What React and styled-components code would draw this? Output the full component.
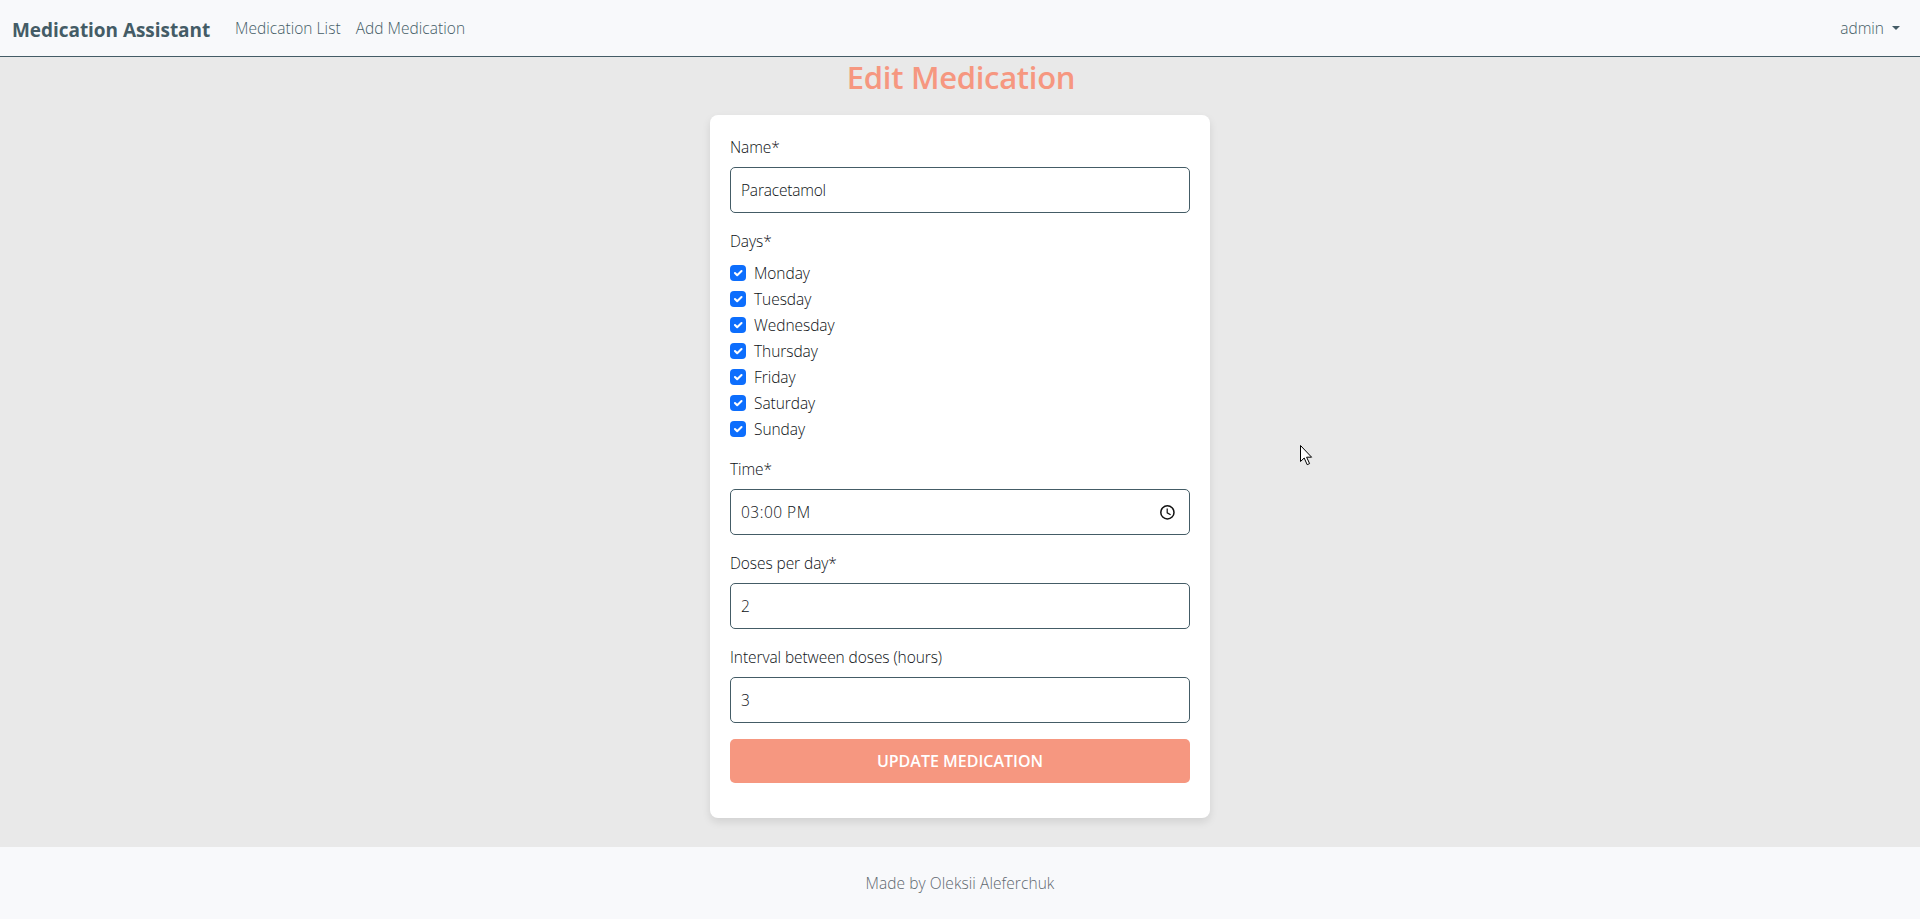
import React from "react";
import styled, { createGlobalStyle } from "styled-components";

const slate = "#445c66";
const coral = "#f69780";

const GlobalStyle = createGlobalStyle`
  *, *::before, *::after { box-sizing: border-box; }
  body {
    margin: 0;
    background: #e9e9e9;
    color: #0c1014;
    font: 350 15.5px/24px "Open Sans", "Noto Sans", sans-serif;
  }
`;

const Page = styled.div`
  display: flex;
  flex-direction: column;
  height: 919px;
  overflow: hidden;
`;

const Navbar = styled.nav`
  display: flex;
  align-items: center;
  flex: none;
  height: 57px;
  padding: 0 20px 0 12px;
  background: #f8f9fb;
  border-bottom: 1px solid ${slate};
  color: ${slate};
`;

const Brand = styled.a`
  width: 223px;
  padding-top: 3px;
  font-size: 19px;
  font-weight: 700;
  line-height: 30px;
  letter-spacing: -0.05px;
  white-space: nowrap;
`;

const NavLink = styled.a`
  margin-right: 15px;
  letter-spacing: 0.04px;
  white-space: nowrap;
`;

const UserMenu = styled.button`
  display: flex;
  align-items: center;
  gap: 8px;
  margin-left: auto;
  padding: 0;
  border: 0;
  background: none;
  color: inherit;
  font: inherit;
`;

const Caret = styled.span`
  border: 4.5px solid transparent;
  border-top-color: currentColor;
  border-bottom: 0;
`;

const Main = styled.main`
  display: flex;
  flex-direction: column;
  align-items: center;
  flex: 1;
`;

const Title = styled.h1`
  margin: 1px 0 18px;
  padding-left: 2px;
  color: ${coral};
  font-size: 31px;
  font-weight: 600;
  line-height: 39px;
  letter-spacing: -0.3px;
`;

const Card = styled.form`
  width: 500px;
  height: 703px;
  padding: 20px;
  border-radius: 8px;
  background: #fff;
  box-shadow: 0 4px 8px rgba(0, 0, 0, 0.1);
`;

const Field = styled.div`
  margin-bottom: 16px;
`;

const Label = styled.div`
  margin-bottom: 8px;
  letter-spacing: -0.08px;
`;

const Control = styled.div`
  display: flex;
  align-items: center;
  justify-content: space-between;
  height: 46px;
  padding: 0 14px 0 10px;
  border: 1px solid ${slate};
  border-radius: 5px;
  letter-spacing: ${(p) => p.$tracking || 0}px;
`;

const DayList = styled.div`
  margin-bottom: 14px;
`;

const DayRow = styled.label`
  display: flex;
  align-items: flex-start;
  gap: 8px;
  height: 26px;
`;

const Check = styled.span`
  display: flex;
  width: 16px;
  height: 16px;
  margin-top: 4px;
  border-radius: 4px;
  background: #0d6efd;
`;

const DayName = styled.span`
  letter-spacing: -0.05px;
`;

const Submit = styled.button`
  display: block;
  width: 100%;
  height: 44px;
  padding: 0;
  border: 0;
  border-radius: 5px;
  background: ${coral};
  color: #fff;
  font: 600 16px/24px "Open Sans", "Noto Sans", sans-serif;
`;

const Footer = styled.footer`
  flex: none;
  height: 72px;
  padding-top: 24px;
  background: #f8f9fb;
  color: #5f686f;
  text-align: center;
  letter-spacing: 0.07px;
`;

const Pointer = styled.svg`
  position: absolute;
  left: 1299px;
  top: 444px;
`;

const days = ["Monday", "Tuesday", "Wednesday", "Thursday", "Friday", "Saturday", "Sunday"];

function CheckBox() {
  return (
    <Check>
      <svg width="16" height="16" viewBox="0 0 20 20" fill="none">
        <path d="M6.2 10l2.8 2.8 5.4-5.2" stroke="#fff" strokeWidth="2.6" strokeLinecap="round" strokeLinejoin="round" />
      </svg>
    </Check>
  );
}

function ClockIcon() {
  return (
    <svg width="16" height="16" viewBox="0 0 16 16" fill="none" stroke="#111">
      <circle cx="8.4" cy="8.4" r="6.6" strokeWidth="1.5" />
      <path d="M8.2 4.6V8.8l3.4 2" strokeWidth="1.2" />
    </svg>
  );
}

export default function App() {
  return (
    <Page>
      <GlobalStyle />
      <Navbar>
        <Brand>Medication Assistant</Brand>
        <NavLink>Medication List</NavLink>
        <NavLink>Add Medication</NavLink>
        <UserMenu type="button">
          admin
          <Caret />
        </UserMenu>
      </Navbar>
      <Main>
        <Title>Edit Medication</Title>
        <Card>
          <Field>
            <Label>Name*</Label>
            <Control $tracking={-0.2}>Paracetamol</Control>
          </Field>
          <Label>Days*</Label>
          <DayList>
            {days.map((day) => (
              <DayRow key={day}>
                <CheckBox />
                <DayName>{day}</DayName>
              </DayRow>
            ))}
          </DayList>
          <Field>
            <Label>Time*</Label>
            <Control $tracking={0.5}>
              03:00 PM
              <ClockIcon />
            </Control>
          </Field>
          <Field>
            <Label>Doses per day*</Label>
            <Control>2</Control>
          </Field>
          <Field>
            <Label>Interval between doses (hours)</Label>
            <Control>3</Control>
          </Field>
          <Submit type="button">UPDATE MEDICATION</Submit>
        </Card>
      </Main>
      <Footer>Made by Oleksii Aleferchuk</Footer>
      <Pointer width="14" height="23" viewBox="0 0 14 23">
        <path d="M1.5 1.5v16l3.7-3.5 3 6.7 2.4-1.1-3-6.4h5z" fill="#fff" stroke="#000" />
      </Pointer>
    </Page>
  );
}
